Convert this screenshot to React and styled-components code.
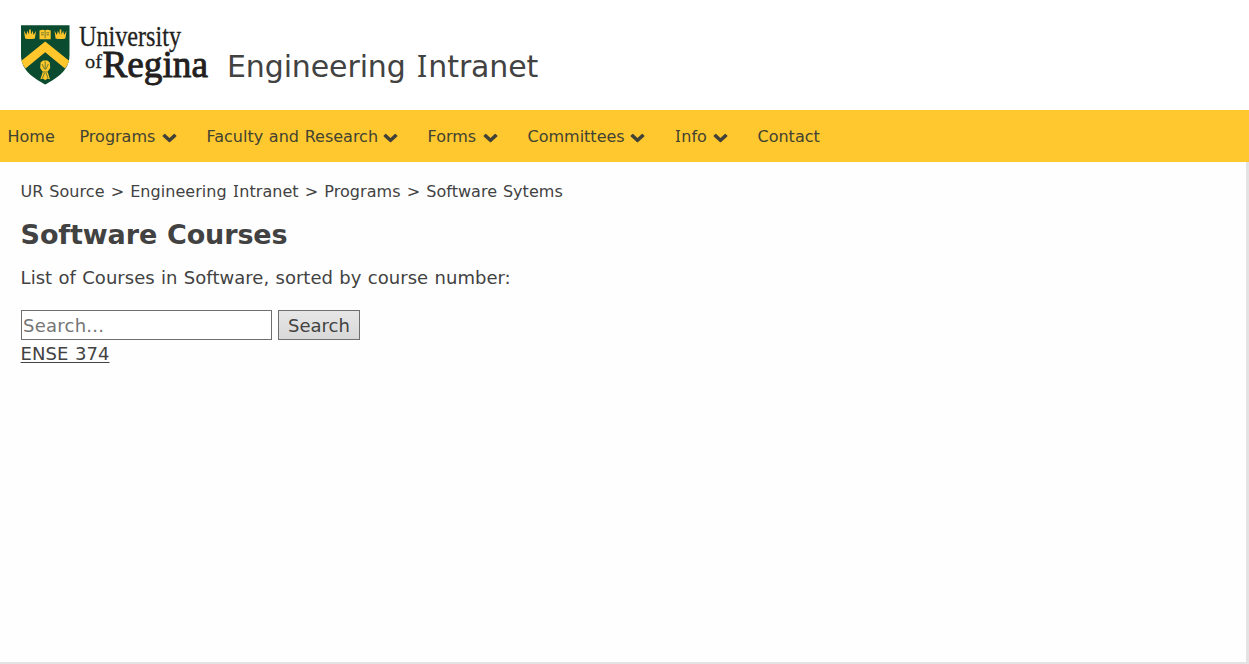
import React from "react";
import styled, { createGlobalStyle } from "styled-components";

const GlobalStyle = createGlobalStyle`
  * { box-sizing: border-box; }
  body {
    margin: 0;
    background: #fefefe;
    color: #424242;
    font-family: Verdana, "DejaVu Sans", sans-serif;
    font-size: 18px;
    word-spacing: 0.034em;
  }
`;

const Page = styled.div`
  display: flex;
  flex-direction: column;
  height: 664px;
  overflow: hidden;
`;

const Header = styled.header`
  display: flex;
  flex: none;
  height: 110px;
  padding: 20px 0 0 15px;
  background: #fff;
`;

const Logo = styled.svg`
  display: block;
  flex: none;
  width: 200px;
  height: 70px;
`;

const SiteTitle = styled.div`
  padding: 29px 0 0 12px;
  font-size: 30px;
  line-height: 36px;
  white-space: nowrap;
  letter-spacing: -0.12px;
`;

const SerifI = styled.span`
  display: inline-block;
  width: 0.421em;
  text-align: center;
  font-family: "Noto Sans", sans-serif;
  line-height: 1;
  letter-spacing: 0;
`;

const Nav = styled.nav`
  display: flex;
  flex: none;
  align-items: center;
  height: 52px;
  padding-left: 7.5px;
  background: #ffc82e;
  font-size: 16px;
`;

const NavItem = styled.a`
  display: flex;
  align-items: center;
  justify-content: space-between;
  flex: none;
  width: ${(p) => p.$width}px;
  margin-right: ${(p) => p.$gap}px;
  color: #424232;
  white-space: nowrap;
`;

const Chevron = styled.svg`
  width: 15px;
  height: 10px;
  margin-top: 3px;
  fill: #424238;
`;

const Content = styled.main`
  flex: 1;
  padding: 19px 20px 0 20.6px;
  border-right: 3px solid #e3e3e3;
  border-bottom: 2px solid #e3e3e3;
`;

const Breadcrumbs = styled.div`
  display: flex;
  gap: 6.1px;
  height: 22px;
  font-size: 16px;
  line-height: 22px;
  letter-spacing: 0.05px;
  white-space: nowrap;
`;

const Heading = styled.h1`
  margin: 14px 0 0;
  font-size: 27px;
  line-height: 36px;
  letter-spacing: -0.12px;
`;

const Intro = styled.p`
  margin: 11px 0 0;
  line-height: 28px;
  letter-spacing: 0.025px;
`;

const SearchForm = styled.form`
  display: flex;
  gap: 6px;
  margin: 18px 0 0 0.4px;
`;

const SearchInput = styled.input`
  width: 251px;
  height: 30px;
  padding: 1px;
  border: 1px solid #6f6f6f;
  border-radius: 0;
  background: #fff;
  font: inherit;
  letter-spacing: 0.25px;
  &::placeholder { color: #757575; opacity: 1; }
`;

const SearchButton = styled.button`
  width: 82px;
  height: 30px;
  padding: 0;
  border: 1px solid #6f6f6f;
  border-radius: 0;
  background: linear-gradient(#e6e6e6, #d8d8d8);
  color: #424242;
  font: inherit;
`;

const CourseLink = styled.a`
  display: inline-block;
  line-height: 28px;
  letter-spacing: 0.07px;
  color: #424242;
  text-decoration: underline;
  text-decoration-thickness: 1px;
  text-underline-offset: 2px;
`;

const navItems = [
  { label: "Home", width: 47.5, gap: 24.5 },
  { label: "Programs", width: 97.5, gap: 29.5, menu: true },
  { label: "Faculty and Research", width: 191.5, gap: 29.5, menu: true },
  { label: "Forms", width: 70.5, gap: 29.5, menu: true },
  { label: "Committees", width: 117.5, gap: 29.5, menu: true },
  { label: "Info", width: 53.5, gap: 29.5, menu: true },
  { label: "Contact", width: 63, gap: 0 },
];

const crumbs = ["UR Source", "Engineering Intranet", "Programs", "Software Sytems"];

const withSerifI = (text) =>
  text.split(/(I)/).map((part, i) => (part === "I" ? <SerifI key={i}>I</SerifI> : part));

function Crown({ x }) {
  return (
    <g transform={`translate(${x} 29)`}>
      <path d="M0 1.8 L2.4 6 L3.3 1.8 L5 5.4 L5.2 .5 H6.8 L7 5.4 L8.7 1.8 L9.6 6 L12 1.8 L10.9 9.4 Q6 10.4 1.1 9.4Z" />
    </g>
  );
}

function UniversityLogo() {
  return (
    <Logo viewBox="15 20 200 70">
      <path d="M21 25.3H69.5V55C69.5 70 58 77.5 45.2 84.5C32.5 77.5 21 70 21 55Z" fill="#0b4b2f" />
      <g fill="#ffc72c">
        <Crown x={24} />
        <Crown x={54.5} />
        <path d="M39.5 30.5Q42.5 29.3 45 30.4Q47.5 29.3 50.7 30.5V39.2H39.5Z" />
        <path d="M45.2 41.5L69.1 60.8Q67.9 64.8 65 68.4L45.2 52.3L25.5 68.4Q22.6 64.8 21.4 60.8Z" />
        <path d="M40.6 62.5L43 60.5H47.4L49.8 62.5L50.2 68L47.6 71.8L50 79.2L47.4 78.6L45.2 80.3L43 78.6L40.4 79.2L42.8 71.8L40.2 68Z" />
      </g>
      <g fill="none" stroke="#0b4b2f" strokeWidth=".6">
        <path d="M45.1 31V38.2M41 32.8H43.8M46.5 32.8H49.2M41 34.8H43.8M46.5 34.8H49.2" />
        <path d="M42 64L44.5 69M48.4 64L46 69M45.2 61.5V70M42.5 78L44.5 73M48 78L46 73M43 72H47.5" />
      </g>
      <g fill="#231f20" stroke="#231f20" fontFamily="'Liberation Serif', serif">
        <text x="79" y="46" fontSize="28.5" strokeWidth=".3" textLength="102" lengthAdjust="spacingAndGlyphs">University</text>
        <text x="85" y="67.7" fontSize="19.5" strokeWidth=".3" textLength="17" lengthAdjust="spacingAndGlyphs">of</text>
        <text x="102.5" y="77.3" fontSize="38" strokeWidth=".9" textLength="105.5" lengthAdjust="spacingAndGlyphs">Regina</text>
      </g>
    </Logo>
  );
}

export default function App() {
  return (
    <>
      <GlobalStyle />
      <Page>
        <Header>
          <UniversityLogo />
          <SiteTitle>{withSerifI("Engineering Intranet")}</SiteTitle>
        </Header>
        <Nav>
          {navItems.map((item) => (
            <NavItem key={item.label} $width={item.width} $gap={item.gap}>
              <span>{withSerifI(item.label)}</span>
              {item.menu && (
                <Chevron viewBox="0 0 15 10">
                  <path d="M0.7 2.6L2.4 0.9Q2.8 0.5 3.2 0.9L7.5 5L11.8 0.9Q12.2 0.5 12.6 0.9L14.3 2.6Q14.6 3 14.3 3.4L7.9 9.2Q7.5 9.5 7.1 9.2L0.7 3.4Q0.4 3 0.7 2.6Z" />
                </Chevron>
              )}
            </NavItem>
          ))}
        </Nav>
        <Content>
          <Breadcrumbs>
            {crumbs.map((crumb, i) => (
              <React.Fragment key={crumb}>
                {i > 0 && <span>&gt;</span>}
                <span>{withSerifI(crumb)}</span>
              </React.Fragment>
            ))}
          </Breadcrumbs>
          <Heading>Software Courses</Heading>
          <Intro>List of Courses in Software, sorted by course number:</Intro>
          <SearchForm>
            <SearchInput placeholder="Search..." />
            <SearchButton type="button">Search</SearchButton>
          </SearchForm>
          <CourseLink>ENSE 374</CourseLink>
        </Content>
      </Page>
    </>
  );
}
